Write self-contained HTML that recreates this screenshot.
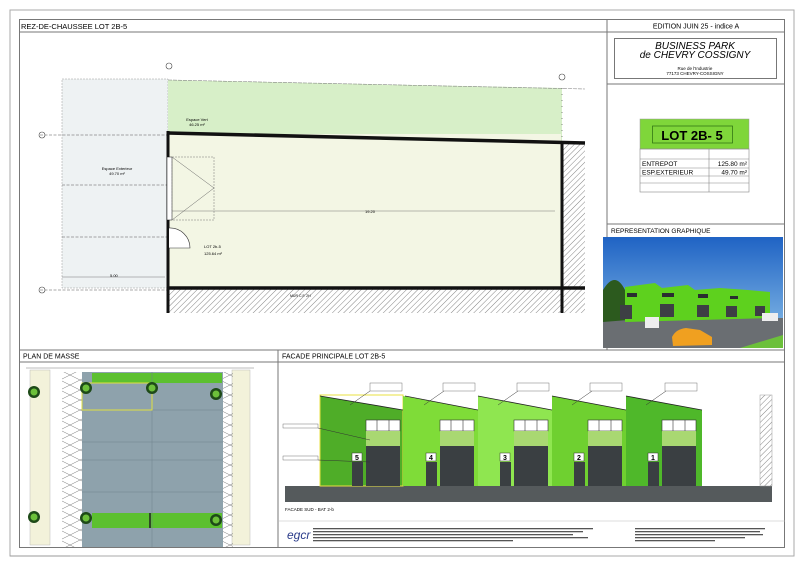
<!DOCTYPE html>
<html><head><meta charset="utf-8"><style>
html,body{margin:0;padding:0;background:#fff;width:800px;height:565px;overflow:hidden}
svg{display:block}
text{font-family:"Liberation Sans",sans-serif}
</style></head><body>
<svg width="800" height="565" viewBox="0 0 800 565" xmlns="http://www.w3.org/2000/svg">
<defs>
<pattern id="h" width="4" height="4" patternUnits="userSpaceOnUse" patternTransform="rotate(45)"><line x1="0" y1="0" x2="0" y2="4" stroke="#666" stroke-width="0.8"/></pattern>
<pattern id="z" width="20" height="10" patternUnits="userSpaceOnUse"><polyline points="0,0 20,10" stroke="#777" stroke-width="0.5" fill="none"/><polyline points="0,10 20,0" stroke="#777" stroke-width="0.5" fill="none"/></pattern>
<linearGradient id="sky" x1="0" y1="0" x2="0" y2="1"><stop offset="0" stop-color="#1f63c4"/><stop offset="1" stop-color="#8ec3ea"/></linearGradient>
</defs>
<rect x="10" y="10" width="784" height="546" fill="none" stroke="#aaa" stroke-width="1"/>
<rect x="19.5" y="19.5" width="765" height="528" fill="none" stroke="#777" stroke-width="1"/>
<line x1="19" y1="32" x2="785" y2="32" stroke="#777"/>
<line x1="607" y1="19" x2="607" y2="350" stroke="#777"/>
<line x1="19" y1="350" x2="785" y2="350" stroke="#777"/>
<line x1="19" y1="362" x2="785" y2="362" stroke="#777"/>
<line x1="278" y1="350" x2="278" y2="547" stroke="#777"/>
<text x="21" y="29" font-size="7.5">REZ-DE-CHAUSSEE LOT 2B-5</text>
<text x="696" y="28.5" font-size="7" text-anchor="middle">EDITION JUIN 25 - indice A</text>
<rect x="614.5" y="38.5" width="162" height="40" fill="none" stroke="#777"/>
<text x="695" y="49" font-size="10" font-style="italic" text-anchor="middle">BUSINESS PARK</text>
<text x="695" y="58" font-size="10" font-style="italic" text-anchor="middle">de CHEVRY COSSIGNY</text>
<text x="695" y="70" font-size="4.5" text-anchor="middle">Rue de l'Industrie</text>
<text x="695" y="75" font-size="4.5" text-anchor="middle">77173 CHEVRY-COSSIGNY</text>
<line x1="607" y1="84" x2="785" y2="84" stroke="#777"/>
<rect x="640" y="119" width="109" height="30" fill="#7fd63a" stroke="#999" stroke-width="0.5"/>
<rect x="652.5" y="126" width="80" height="17" fill="none" stroke="#2a6a10" stroke-width="0.7"/>
<text x="692" y="140" font-size="13" font-weight="bold" text-anchor="middle">LOT 2B- 5</text>
<g stroke="#888" stroke-width="0.6" fill="none">
<rect x="640" y="149" width="109" height="43"/>
<line x1="709" y1="149" x2="709" y2="192"/>
<line x1="640" y1="159" x2="749" y2="159"/>
<line x1="640" y1="168" x2="749" y2="168"/>
<line x1="640" y1="176" x2="749" y2="176"/>
<line x1="640" y1="183" x2="749" y2="183"/>
</g>
<text x="642" y="166" font-size="6.5">ENTREPOT</text>
<text x="747" y="166" font-size="6.5" text-anchor="end">125.80 m²</text>
<text x="642" y="174.5" font-size="6.5">ESP.EXTERIEUR</text>
<text x="747" y="174.5" font-size="6.5" text-anchor="end">49.70 m²</text>
<line x1="607" y1="224" x2="785" y2="224" stroke="#777"/>
<text x="611" y="233" font-size="6.5">REPRESENTATION GRAPHIQUE</text>
<rect x="603" y="237" width="180" height="111" fill="url(#sky)"/>
<rect x="603" y="318" width="180" height="30" fill="#6a6e72"/>
<polygon points="740,348 783,335 783,348" fill="#6cc03a"/>
<path d="M603 290 Q615 270 625 290 L628 320 L603 322Z" fill="#2c5a1e"/>
<polygon points="625,287 655,283 662,288 688,285 695,290 720,288 748,290 770,292 770,318 625,322" fill="#5ed11e"/>
<g fill="#3d3f44">
<rect x="620" y="305" width="12" height="14"/><rect x="660" y="304" width="14" height="13"/><rect x="697" y="305" width="12" height="12"/><rect x="726" y="306" width="11" height="11"/><rect x="755" y="306" width="10" height="10"/>
</g>
<g fill="#2a2d30"><rect x="627" y="293" width="10" height="4"/><rect x="662" y="293" width="12" height="4"/><rect x="698" y="294" width="10" height="4"/><rect x="730" y="296" width="8" height="3"/></g>
<rect x="645" y="317" width="14" height="11" fill="#eee"/>
<rect x="762" y="313" width="16" height="8" fill="#eee"/>
<path d="M672 337 Q676 329 686 328 L700 330 L712 337 L712 345 L673 346Z" fill="#f0a020"/>
<rect x="62" y="79" width="106" height="209" fill="#eef2f3" stroke="#999" stroke-width="0.5" stroke-dasharray="2,1"/>
<g stroke="#555" stroke-width="0.5" stroke-dasharray="3,1.5"><line x1="40" y1="135" x2="168" y2="135"/><line x1="62" y1="185" x2="168" y2="185"/><line x1="62" y1="237" x2="168" y2="237"/><line x1="40" y1="290" x2="168" y2="290"/></g>
<polygon points="168,80 562,88 562,142 168,134" fill="#d7efc8"/>
<line x1="168" y1="80" x2="585" y2="89" stroke="#888" stroke-width="0.6" stroke-dasharray="4,1"/>
<rect x="169" y="134" width="392" height="154" fill="#f3f6e4"/>
<rect x="168" y="288" width="417" height="25" fill="url(#h)"/>
<rect x="562" y="142" width="23" height="146" fill="url(#h)"/>
<g stroke="#111" fill="none">
<polyline points="168,133 585,143" stroke-width="3.5"/>
<line x1="168" y1="288" x2="585" y2="288" stroke-width="3.5"/>
<line x1="168" y1="131" x2="168" y2="313" stroke-width="3"/>
<line x1="562" y1="142" x2="562" y2="313" stroke-width="3"/>
</g>
<rect x="167" y="157" width="5" height="63" fill="#fff" stroke="#111" stroke-width="0.5"/>
<rect x="172" y="157" width="42" height="63" fill="none" stroke="#777" stroke-width="0.5" stroke-dasharray="2,1"/>
<polyline points="172,157 214,188 172,220" fill="none" stroke="#666" stroke-width="0.5"/>
<path d="M169 228 A20 20 0 0 1 190 248 L169 248" fill="#fff" stroke="#333" stroke-width="0.6"/>
<line x1="172" y1="211" x2="555" y2="211" stroke="#555" stroke-width="0.4"/>
<text x="365" y="213" font-size="4">19.20</text>
<line x1="562" y1="88" x2="562" y2="142" stroke="#444" stroke-width="0.6" stroke-dasharray="1,5"/>
<g fill="none" stroke="#444" stroke-width="0.6"><circle cx="169" cy="66" r="3"/><circle cx="562" cy="77" r="3"/><circle cx="42" cy="135" r="3"/><circle cx="42" cy="290" r="3"/></g>
<line x1="62" y1="277" x2="165" y2="277" stroke="#555" stroke-width="0.4"/>
<text x="110" y="277" font-size="4">5.00</text>
<text x="197" y="121" font-size="4" text-anchor="middle">Espace Vert</text>
<text x="197" y="126" font-size="4" text-anchor="middle">46.25 m²</text>
<text x="117" y="170" font-size="4" text-anchor="middle">Espace Exterieur</text>
<text x="117" y="175" font-size="4" text-anchor="middle">49.70 m²</text>
<text x="204" y="248" font-size="4">LOT 2b-5</text>
<text x="204" y="255" font-size="4">125.64 m²</text>
<text x="290" y="297" font-size="3.5">MUR C.F. 2H</text>
<text x="23" y="358.5" font-size="7">PLAN DE MASSE</text>
<text x="282" y="358.5" font-size="7">FACADE PRINCIPALE LOT 2B-5</text>
<rect x="30" y="370" width="20" height="175" fill="#f3f2da" stroke="#bbb" stroke-width="0.5"/>
<rect x="232" y="370" width="18" height="175" fill="#f3f2da" stroke="#bbb" stroke-width="0.5"/>
<rect x="62" y="372" width="20" height="175" fill="url(#z)"/>
<rect x="223" y="372" width="10" height="175" fill="url(#z)"/>
<rect x="82" y="372" width="141" height="175" fill="#8ea2ac"/>
<rect x="92" y="373" width="130" height="10" fill="#5cc030"/>
<rect x="92" y="513" width="130" height="15" fill="#5cc030"/>
<line x1="150" y1="513" x2="150" y2="528" stroke="#222" stroke-width="1.5"/>
<g stroke="#6f828c" stroke-width="0.5">
<line x1="82" y1="410" x2="223" y2="410"/><line x1="82" y1="442" x2="223" y2="442"/><line x1="82" y1="460" x2="223" y2="460"/><line x1="82" y1="492" x2="223" y2="492"/>
<line x1="152" y1="372" x2="152" y2="547"/>
</g>
<rect x="82" y="383" width="70" height="27" fill="none" stroke="#e0e040" stroke-width="1"/>
<g fill="#1e4a18"><circle cx="34" cy="392" r="6"/><circle cx="86" cy="388" r="6"/><circle cx="152" cy="388" r="6"/><circle cx="216" cy="394" r="6"/><circle cx="34" cy="517" r="6"/><circle cx="86" cy="518" r="6"/><circle cx="216" cy="520" r="6"/></g>
<g fill="#6cc03a"><circle cx="34" cy="392" r="3.5"/><circle cx="86" cy="388" r="3.5"/><circle cx="152" cy="388" r="3.5"/><circle cx="216" cy="394" r="3.5"/><circle cx="34" cy="517" r="3.5"/><circle cx="86" cy="518" r="3.5"/><circle cx="216" cy="520" r="3.5"/></g>
<line x1="26" y1="368" x2="254" y2="368" stroke="#555" stroke-width="0.4"/>
<rect x="285" y="486" width="487" height="16" fill="#555a5c"/>
<rect x="760" y="395" width="12" height="91" fill="url(#h)" stroke="#999" stroke-width="0.5"/>
<g>
<polygon points="320,396 403,410 403,486 320,486" fill="#4fad28"/>
<polygon points="320,395 403,395 403,486 320,486" fill="none" stroke="#e8e040" stroke-width="1"/>
<polygon points="403,396 478,410 478,486 403,486" fill="#7fdc38"/>
<polygon points="478,396 552,410 552,486 478,486" fill="#8fe650"/>
<polygon points="552,396 626,410 626,486 552,486" fill="#6fd030"/>
<polygon points="626,396 702,410 702,486 626,486" fill="#4fb82a"/>
<g stroke="#222" stroke-width="0.8"><line x1="320" y1="396" x2="403" y2="410"/><line x1="405" y1="396" x2="478" y2="410"/><line x1="478" y1="396" x2="552" y2="410"/><line x1="552" y1="396" x2="626" y2="410"/><line x1="626" y1="396" x2="702" y2="410"/></g>
</g>
<g id="u">
<rect x="366" y="420" width="34" height="11" fill="#fff" stroke="#333" stroke-width="0.6"/>
<line x1="377" y1="420" x2="377" y2="431" stroke="#333" stroke-width="0.6"/><line x1="389" y1="420" x2="389" y2="431" stroke="#333" stroke-width="0.6"/>
<rect x="366" y="431" width="34" height="15" fill="#a9d872"/>
<rect x="366" y="446" width="34" height="40" fill="#3a3f42"/>
<rect x="352" y="462" width="11" height="24" fill="#3a3f42"/>
<rect x="352" y="453" width="10" height="8" fill="#fff" stroke="#333" stroke-width="0.5"/>
<line x1="370" y1="391" x2="350" y2="405" stroke="#333" stroke-width="0.5"/>
</g>
<use href="#u" x="74"/><use href="#u" x="148"/><use href="#u" x="222"/><use href="#u" x="296"/>
<g font-size="7" font-weight="bold" text-anchor="middle"><text x="357" y="460">5</text><text x="431" y="460">4</text><text x="505" y="460">3</text><text x="579" y="460">2</text><text x="653" y="460">1</text></g>
<g fill="#fff" stroke="#555" stroke-width="0.4"><rect x="370" y="383" width="32" height="8"/><rect x="443" y="383" width="32" height="8"/><rect x="517" y="383" width="32" height="8"/><rect x="590" y="383" width="32" height="8"/><rect x="665" y="383" width="32" height="8"/><rect x="283" y="424" width="35" height="4"/><rect x="283" y="456" width="35" height="4"/></g>
<g stroke="#333" stroke-width="0.5"><line x1="318" y1="428" x2="370" y2="440"/><line x1="318" y1="460" x2="370" y2="462"/></g>
<text x="285" y="511" font-size="4.5">FACADE SUD - BAT 2-b</text>
<line x1="278" y1="521" x2="785" y2="521" stroke="#bbb" stroke-width="0.5"/>
<text x="287" y="539" font-size="12" font-style="italic" fill="#2a3b8a" font-family="Liberation Serif">egcr</text>
<g fill="#555"><rect x="313" y="528" width="280" height="1.3"/><rect x="313" y="531" width="270" height="1.3"/><rect x="313" y="534" width="260" height="1.3"/><rect x="313" y="537" width="275" height="1.3"/><rect x="313" y="540" width="200" height="1.3"/><rect x="635" y="528" width="130" height="1.3"/><rect x="635" y="531" width="125" height="1.3"/><rect x="635" y="534" width="128" height="1.3"/><rect x="635" y="537" width="110" height="1.3"/><rect x="635" y="540" width="80" height="1.3"/></g>
<line x1="10" y1="556" x2="70" y2="556" stroke="#999"/>
</svg>
</body></html>
